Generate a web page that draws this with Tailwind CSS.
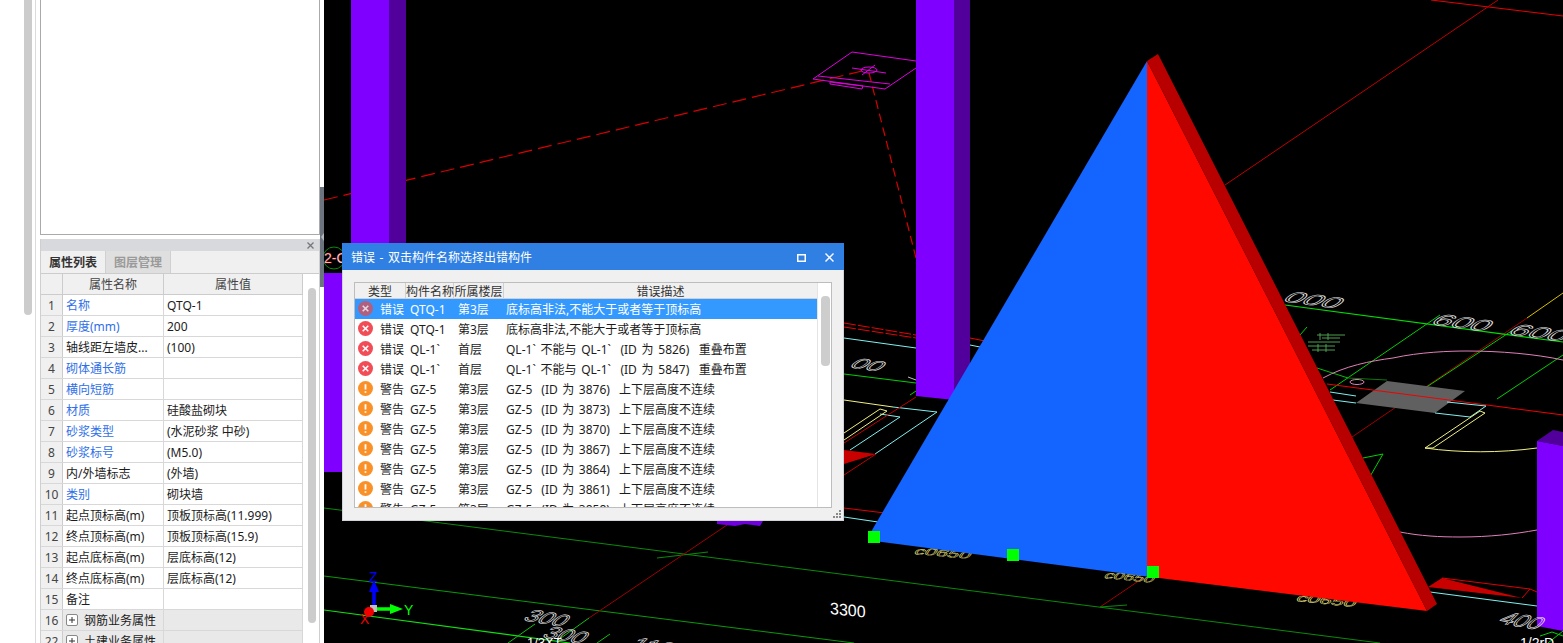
<!DOCTYPE html>
<html lang="zh-CN">
<head>
  <meta charset="UTF-8" />
  <title>错误 - 双击构件名称选择出错构件</title>
  <script src="https://cdn.jsdelivr.net/npm/@tailwindcss/browser@4"></script>
</head>
<body class="bg-black overflow-hidden font-['Noto_Sans','Noto_Sans_CJK_SC',sans-serif] text-[12px] text-[#1c1c1c]">
<div class="flex w-[1563px] h-[643px] overflow-hidden">

  <!-- left property panel -->
  <aside class="w-[324px] h-[643px] bg-white flex shrink-0">
    <div class="ml-[24px] w-[8px] h-[315px] bg-[#cccccc] rounded-b-[4px]"></div>
    <div class="ml-[3px] w-px h-full bg-[#dcdcdc]"></div>
    <div class="ml-[4px] w-[280px] h-full flex flex-col">
      <div class="h-[235px] shrink-0 border-x border-b border-[#aaaaaa] bg-white"></div>
      <div class="mt-[4px] flex-1 flex flex-col border-x border-[#cfcfcf] overflow-hidden">
        <div class="h-[12px] shrink-0 bg-[#d7d9dd] flex items-center justify-end pr-[5px]">
          <svg class="w-[7px] h-[7px]" viewBox="0 0 7 7"><path d="M0.5 .5L6.5 6.5M6.5 .5L.5 6.5" stroke="#777" stroke-width="1.3" fill="none"/></svg>
        </div>
        <!-- tabs -->
        <div class="h-[23px] shrink-0 bg-[#f0f0f0] flex border-b border-[#cccccc] leading-[24px]">
          <div class="w-[65px] text-center font-bold text-[#333333] border-r border-[#d0d0d0]">属性列表</div>
          <div class="w-[65px] text-center bg-[#dfdfdf] font-bold text-[#9a9a9a] border-r border-[#d0d0d0]">图层管理</div>
        </div>
        <div class="flex flex-1 min-h-0">
          <div class="w-[262px] shrink-0">
            <!-- table header -->
            <div class="flex h-[21px] bg-[#f0f0f0] border-b border-[#cccccc] text-[#444444]">
              <div class="w-[22px] border-r border-[#cccccc]"></div>
              <div class="w-[101px] border-r border-[#cccccc] text-center leading-[22px]">属性名称</div>
              <div class="w-[139px] border-r border-[#cccccc] text-center leading-[22px]">属性值</div>
            </div>
            <!-- rows -->
            <div class="flex h-[21px] border-b border-[#d8d8d8]"><div class="w-[22px] bg-[#f0f0f0] border-r border-[#cccccc] text-center leading-[22px] text-[#444444]">1</div><div class="w-[101px] border-r border-[#d8d8d8] pl-[3px] leading-[22px] text-[#2f6fe8] truncate">名称</div><div class="w-[139px] border-r border-[#d8d8d8] pl-[3px] leading-[22px]">QTQ-1</div></div>
            <div class="flex h-[21px] border-b border-[#d8d8d8]"><div class="w-[22px] bg-[#f0f0f0] border-r border-[#cccccc] text-center leading-[22px] text-[#444444]">2</div><div class="w-[101px] border-r border-[#d8d8d8] pl-[3px] leading-[22px] text-[#2f6fe8] truncate">厚度(mm)</div><div class="w-[139px] border-r border-[#d8d8d8] pl-[3px] leading-[22px]">200</div></div>
            <div class="flex h-[21px] border-b border-[#d8d8d8]"><div class="w-[22px] bg-[#f0f0f0] border-r border-[#cccccc] text-center leading-[22px] text-[#444444]">3</div><div class="w-[101px] border-r border-[#d8d8d8] pl-[3px] leading-[22px] truncate">轴线距左墙皮...</div><div class="w-[139px] border-r border-[#d8d8d8] pl-[3px] leading-[22px]">(100)</div></div>
            <div class="flex h-[21px] border-b border-[#d8d8d8]"><div class="w-[22px] bg-[#f0f0f0] border-r border-[#cccccc] text-center leading-[22px] text-[#444444]">4</div><div class="w-[101px] border-r border-[#d8d8d8] pl-[3px] leading-[22px] text-[#2f6fe8] truncate">砌体通长筋</div><div class="w-[139px] border-r border-[#d8d8d8] pl-[3px] leading-[22px]"></div></div>
            <div class="flex h-[21px] border-b border-[#d8d8d8]"><div class="w-[22px] bg-[#f0f0f0] border-r border-[#cccccc] text-center leading-[22px] text-[#444444]">5</div><div class="w-[101px] border-r border-[#d8d8d8] pl-[3px] leading-[22px] text-[#2f6fe8] truncate">横向短筋</div><div class="w-[139px] border-r border-[#d8d8d8] pl-[3px] leading-[22px]"></div></div>
            <div class="flex h-[21px] border-b border-[#d8d8d8]"><div class="w-[22px] bg-[#f0f0f0] border-r border-[#cccccc] text-center leading-[22px] text-[#444444]">6</div><div class="w-[101px] border-r border-[#d8d8d8] pl-[3px] leading-[22px] text-[#2f6fe8] truncate">材质</div><div class="w-[139px] border-r border-[#d8d8d8] pl-[3px] leading-[22px]">硅酸盐砌块</div></div>
            <div class="flex h-[21px] border-b border-[#d8d8d8]"><div class="w-[22px] bg-[#f0f0f0] border-r border-[#cccccc] text-center leading-[22px] text-[#444444]">7</div><div class="w-[101px] border-r border-[#d8d8d8] pl-[3px] leading-[22px] text-[#2f6fe8] truncate">砂浆类型</div><div class="w-[139px] border-r border-[#d8d8d8] pl-[3px] leading-[22px]">(水泥砂浆 中砂)</div></div>
            <div class="flex h-[21px] border-b border-[#d8d8d8]"><div class="w-[22px] bg-[#f0f0f0] border-r border-[#cccccc] text-center leading-[22px] text-[#444444]">8</div><div class="w-[101px] border-r border-[#d8d8d8] pl-[3px] leading-[22px] text-[#2f6fe8] truncate">砂浆标号</div><div class="w-[139px] border-r border-[#d8d8d8] pl-[3px] leading-[22px]">(M5.0)</div></div>
            <div class="flex h-[21px] border-b border-[#d8d8d8]"><div class="w-[22px] bg-[#f0f0f0] border-r border-[#cccccc] text-center leading-[22px] text-[#444444]">9</div><div class="w-[101px] border-r border-[#d8d8d8] pl-[3px] leading-[22px] truncate">内/外墙标志</div><div class="w-[139px] border-r border-[#d8d8d8] pl-[3px] leading-[22px]">(外墙)</div></div>
            <div class="flex h-[21px] border-b border-[#d8d8d8]"><div class="w-[22px] bg-[#f0f0f0] border-r border-[#cccccc] text-center leading-[22px] text-[#444444]">10</div><div class="w-[101px] border-r border-[#d8d8d8] pl-[3px] leading-[22px] text-[#2f6fe8] truncate">类别</div><div class="w-[139px] border-r border-[#d8d8d8] pl-[3px] leading-[22px]">砌块墙</div></div>
            <div class="flex h-[21px] border-b border-[#d8d8d8]"><div class="w-[22px] bg-[#f0f0f0] border-r border-[#cccccc] text-center leading-[22px] text-[#444444]">11</div><div class="w-[101px] border-r border-[#d8d8d8] pl-[3px] leading-[22px] truncate">起点顶标高(m)</div><div class="w-[139px] border-r border-[#d8d8d8] pl-[3px] leading-[22px]">顶板顶标高(11.999)</div></div>
            <div class="flex h-[21px] border-b border-[#d8d8d8]"><div class="w-[22px] bg-[#f0f0f0] border-r border-[#cccccc] text-center leading-[22px] text-[#444444]">12</div><div class="w-[101px] border-r border-[#d8d8d8] pl-[3px] leading-[22px] truncate">终点顶标高(m)</div><div class="w-[139px] border-r border-[#d8d8d8] pl-[3px] leading-[22px]">顶板顶标高(15.9)</div></div>
            <div class="flex h-[21px] border-b border-[#d8d8d8]"><div class="w-[22px] bg-[#f0f0f0] border-r border-[#cccccc] text-center leading-[22px] text-[#444444]">13</div><div class="w-[101px] border-r border-[#d8d8d8] pl-[3px] leading-[22px] truncate">起点底标高(m)</div><div class="w-[139px] border-r border-[#d8d8d8] pl-[3px] leading-[22px]">层底标高(12)</div></div>
            <div class="flex h-[21px] border-b border-[#d8d8d8]"><div class="w-[22px] bg-[#f0f0f0] border-r border-[#cccccc] text-center leading-[22px] text-[#444444]">14</div><div class="w-[101px] border-r border-[#d8d8d8] pl-[3px] leading-[22px] truncate">终点底标高(m)</div><div class="w-[139px] border-r border-[#d8d8d8] pl-[3px] leading-[22px]">层底标高(12)</div></div>
            <div class="flex h-[21px] border-b border-[#d8d8d8]"><div class="w-[22px] bg-[#f0f0f0] border-r border-[#cccccc] text-center leading-[22px] text-[#444444]">15</div><div class="w-[101px] border-r border-[#d8d8d8] pl-[3px] leading-[22px] truncate">备注</div><div class="w-[139px] border-r border-[#d8d8d8] pl-[3px] leading-[22px]"></div></div>
            <div class="flex h-[21px] border-b border-[#d8d8d8] bg-[#e9e9e9]"><div class="w-[22px] bg-[#f0f0f0] border-r border-[#cccccc] text-center leading-[22px] text-[#444444]">16</div><div class="w-[101px] border-r border-[#d8d8d8] pl-[3px] flex items-start gap-[6px] leading-[22px]"><svg class="w-[12px] h-[12px] mt-[4px]" viewBox="0 0 12 12"><rect x=".5" y=".5" width="11" height="11" rx="1.5" fill="#fff" stroke="#888"/><path d="M3 6H9M6 3V9" stroke="#333" stroke-width="1"/></svg><span class="whitespace-nowrap">钢筋业务属性</span></div><div class="w-[139px] border-r border-[#d8d8d8]"></div></div>
            <div class="flex h-[21px] border-b border-[#d8d8d8] bg-[#e9e9e9]"><div class="w-[22px] bg-[#f0f0f0] border-r border-[#cccccc] text-center leading-[22px] text-[#444444]">22</div><div class="w-[101px] border-r border-[#d8d8d8] pl-[3px] flex items-start gap-[6px] leading-[22px]"><svg class="w-[12px] h-[12px] mt-[4px]" viewBox="0 0 12 12"><rect x=".5" y=".5" width="11" height="11" rx="1.5" fill="#fff" stroke="#888"/><path d="M3 6H9M6 3V9" stroke="#333" stroke-width="1"/></svg><span class="whitespace-nowrap">土建业务属性</span></div><div class="w-[139px] border-r border-[#d8d8d8]"></div></div>
          </div>
          <div class="ml-[5px] mt-[14px] w-[8px] h-[335px] bg-[#cccccc] rounded-[4px]"></div>
        </div>
      </div>
    </div>
    <div class="w-[4px] mt-[187px] h-[100px] bg-[#6c757f] flex items-center justify-center">
      <span class="w-0 h-0 border-y-[4px] border-y-transparent border-r-[3px] border-r-[#b4b9be]"></span>
    </div>
  </aside>

  <!-- 3D viewport -->
  <main class="relative flex-1 h-[643px] bg-black overflow-hidden">
    <svg class="absolute left-0 top-0 w-[1239px] h-[643px]" viewBox="324 0 1239 643" fill="none">
      <!-- dashed axis lines -->
      <path d="M324 200L862 71" stroke="#d80000" stroke-width="1.2" stroke-dasharray="14 6"/>
      <path d="M869 73L916 258" stroke="#d80000" stroke-width="1.2" stroke-dasharray="9 5"/>
      <!-- magenta plate -->
      <g stroke="#e000e0" stroke-width="1">
        <path d="M916 61L852 52L813 79L885 89L916 68"/>
        <path d="M818 76L890 84M830 82V84L862 89L863 86L830 82"/>
        <ellipse cx="869" cy="70" rx="8" ry="3"/>
        <path d="M852 68L886 73M862 75L875 65"/>
      </g>
      <!-- top right -->
      <path d="M1431 0L1563 16" stroke="#e80000" stroke-width="1"/>
      <path d="M1225 185L1498 0" stroke="#c00000" stroke-width="1"/>
      <!-- grid lines, right -->
      <path d="M1352 437L1527 318" stroke="#a00000" stroke-width="1"/>
      <path d="M1527 318L1563 293" stroke="#d8c000" stroke-width="1"/>
      <path d="M1285 305L1563 342" stroke="#00e000" stroke-width="1.2"/>
      <path d="M1440 315L1330 390M1513 330L1422 390M1563 355L1497 399M1307 327L1300 335" stroke="#00d000" stroke-width="1"/>
      <path d="M1317 368L1348 378" stroke="#00c000" stroke-width="1"/>
      <path d="M1348 378L1387 380" stroke="#0a7a0a" stroke-width="1"/>
      <!-- small green notes -->
      <path d="M1317 335H1345M1322 338H1340M1308 342H1340M1308 346H1335M1312 350H1335M1320 333V340M1328 333V340M1318 344V352M1326 344V352" stroke="#4f9f4f" stroke-width="1"/>
      <path d="M1323 378C1345 366 1370 361 1393 358C1420 352 1450 351 1467 351C1500 351 1535 354 1563 360" stroke="#e080b8" stroke-width="1"/>
      <ellipse cx="1357" cy="382" rx="7" ry="2.5" stroke="#e080b8" stroke-width="1"/>
      <path d="M1387 381L1465 391L1435 413L1356 403Z" fill="#606060"/>
      <path d="M1327 384L1563 415" stroke="#f00000" stroke-width="1"/>
      <path d="M1330 392L1356 396M1333 400L1356 403M1435 413L1470 417L1486 406L1447 402" stroke="#80f0f0" stroke-width="1"/>
      <path d="M1425 448L1480 411L1485 413L1433 448H1425" stroke="#f0f080" stroke-width="1"/>
      <path d="M1425 448C1460 453 1500 453 1537 448" stroke="#f0f080" stroke-width="1"/>
      <path d="M1363 458L1383 454L1368 480" stroke="#00d000" stroke-width="1"/>
      <path d="M1400 532C1420 536 1440 537 1460 537C1490 537 1515 534 1537 530" stroke="#e080b8" stroke-width="1"/>
      <path d="M1428 587L1442 578L1522 598Z" fill="#c80000"/>
      <path d="M1442 578L1530 589L1522 598M1530 589L1537 592" stroke="#e00000" stroke-width="1"/>
      <path d="M1430 592L1537 606" stroke="#80f0f0" stroke-width="1"/>
      <path d="M1540 636L1552 632L1563 636M1548 643L1563 631" stroke="#00d000" stroke-width="1"/>

      <!-- grid lines, middle -->
      <path d="M844 323L916 335M844 327L916 338" stroke="#f00000" stroke-width="1" stroke-dasharray="12 2"/>
      <path d="M970 338L985 341" stroke="#f00000" stroke-width="1"/>
      <path d="M844 338L916 348M970 345L980 347" stroke="#80f0f0" stroke-width="1"/>
      <path d="M844 374L916 383" stroke="#00d000" stroke-width="1"/>
      <path d="M844 400L893 407" stroke="#f0f080" stroke-width="1"/>
      <path d="M893 407L937 412L875 454M880 414L900 417L850 450" stroke="#80f0f0" stroke-width="1"/>
      <path d="M844 433L880 409L887 411L844 440" stroke="#f0f080" stroke-width="1"/>
      <path d="M916 397L844 443M876 454L844 475" stroke="#c00000" stroke-width="1"/>
      <path d="M844 450L876 454L844 464Z" fill="#c80000"/>
      <path d="M844 508L885 513" stroke="#e00000" stroke-width="1"/>
      <path d="M844 517L878 522" stroke="#80f0f0" stroke-width="1"/>
      <path d="M910 395L916 391" stroke="#00d000" stroke-width="1"/>
      <path d="M908 377L916 380" stroke="#c0c0c0" stroke-width="1"/>

      <!-- bottom grid -->
      <path d="M324 508L1380 643" stroke="#0a8a0a" stroke-width="1"/>
      <path d="M657 558L708 552" stroke="#0a8a0a" stroke-width="1"/>
      <path d="M324 576L854 643" stroke="#0a9a0a" stroke-width="1"/>
      <path d="M324 610L570 643" stroke="#10e010" stroke-width="1.2"/>
      <path d="M727 525L589 618" stroke="#a00000" stroke-width="1"/>
      <path d="M535 624L508 643M589 618L561 638M610 634L597 643" stroke="#10c010" stroke-width="1"/>
      <path d="M1100 607L1143 578" stroke="#a00000" stroke-width="1"/>
      <path d="M1100 607L1127 605" stroke="#0a8a0a" stroke-width="1"/>

      <!-- columns -->
      <rect x="351" y="0" width="38" height="243" fill="#8000ff"/>
      <rect x="389" y="0" width="17" height="243" fill="#52009c"/>
      <path d="M324 273H342V472H324Z" fill="#8000ff"/>
      <path d="M916 0H954V400L916 396Z" fill="#8000ff"/>
      <path d="M954 0H970V370L954 400Z" fill="#52009c"/>
      <path d="M717 521H763L760 526L745 524L735 526L717 524Z" fill="#7000e0"/>
      <path d="M1537 441L1553 430L1563 432V446L1537 441Z" fill="#52009c"/>
      <path d="M1537 441L1563 446V631L1537 626Z" fill="#8000ff"/>

      <!-- axis label behind dialog edge -->
      <circle cx="334" cy="258" r="11" stroke="#0a8a0a" stroke-width="1"/>
      <text x="324" y="263" font-family="Liberation Sans" font-size="14" fill="#ffffff" stroke="#e00000" stroke-width=".3">2-C</text>

      <!-- labels lying on the floor, the wall covers their upper part -->
      <g font-family="Liberation Sans" stroke="#e8e080" stroke-width=".45" fill="none" font-size="12">
        <text transform="matrix(1.7 .14 -.6 .8 913 554)">c0650</text>
        <text transform="matrix(1.5 .14 -.6 .8 1103 578)">c0650</text>
        <text transform="matrix(1.8 .18 -.6 .85 1295 601)">c0650</text>
      </g>

      <!-- wall -->
      <path d="M1147 61L868 537L880 541.7L1147 576.5Z" fill="#1464ff"/>
      <path d="M1147 61L1427 611L1147 576.5Z" fill="#ff0800"/>
      <path d="M1147 61L1158 54L1437 604L1427 611Z" fill="#b80000"/>
      <rect x="868" y="531" width="12" height="12" fill="#00ff00"/>
      <rect x="1007" y="549" width="12" height="12" fill="#00ff00"/>
      <rect x="1147" y="566" width="12" height="12" fill="#00ff00"/>

      <!-- dimension labels -->
      <g font-family="Liberation Sans" stroke="#e8e8e8" stroke-width=".5" fill="none" font-size="16">
        <text transform="matrix(2.05 .28 -1.1 .85 1281 301)">000</text>
        <text transform="matrix(2.1 .28 -1.1 .9 1429 324)">600</text>
        <text transform="matrix(2.1 .28 -1.1 .9 1506 334)">600</text>
        <text transform="matrix(1.7 .25 -1 .8 848 367)">00</text>
        <text transform="matrix(1.5 .25 -1 1 1497 623)">400</text>
        <text transform="matrix(1.5 .25 -1 .95 522 620)">300</text>
        <text transform="matrix(1.5 .25 -1 .95 541 637)">300</text>
        <text transform="matrix(1.5 .25 -1 .95 628 648)">1100</text>
      </g>
      <text transform="matrix(1 .1 0 1.05 830 614)" font-family="Liberation Sans" font-size="16" fill="#ffffff">3300</text>
      <text x="527" y="647" font-family="Liberation Sans" font-size="13" fill="#ffffff">1/3XT</text>
      <text x="1520" y="648" font-family="Liberation Sans" font-size="14" fill="#ffffff">1/2rD</text>

      <!-- axis gizmo -->
      <path d="M374 607V590" stroke="#0000ff" stroke-width="3.5"/>
      <path d="M374 580L379 592H369Z" fill="#0000ff"/>
      <path d="M376 609H392" stroke="#00ff00" stroke-width="3.5"/>
      <path d="M403 609L390 604V614Z" fill="#00ff00"/>
      <rect x="370" y="605" width="7" height="7" fill="#c0c0c0"/>
      <circle cx="369" cy="612" r="5" fill="#f00000"/>
      <text x="369" y="582" font-family="Liberation Sans" font-size="14" fill="#0000ff">Z</text>
      <text x="404" y="615" font-family="Liberation Sans" font-size="14" fill="#00ff00">Y</text>
      <text x="360" y="624" font-family="Liberation Sans" font-size="14" fill="#f00000">X</text>
    </svg>

    <!-- error dialog -->
    <div class="absolute left-[18px] top-[243px] w-[502px] h-[278px] bg-[#f0f0f0] border-x border-b border-[#d0d4da] flex flex-col">
      <div class="h-[27px] shrink-0 -mx-px bg-[#2f80e2] flex items-start leading-[29px] text-white pl-[9px] pr-[10px]">
        <span class="[word-spacing:1.5px]">错误 - 双击构件名称选择出错构件</span>
        <svg class="ml-auto mt-[11px] w-[9px] h-[8px]" viewBox="0 0 9 8"><rect x=".75" y=".75" width="7.5" height="6.5" stroke="#fff" stroke-width="1.5" fill="none"/></svg>
        <svg class="ml-[19px] mt-[10px] w-[9px] h-[9px]" viewBox="0 0 9 9"><path d="M.5 .5L8.5 8.5M8.5 .5L.5 8.5" stroke="#fff" stroke-width="1.4" fill="none"/></svg>
      </div>
      <div class="mt-[12px] ml-[11px] w-[478px] h-[226px] bg-white border border-[#bdbdbd] flex overflow-hidden">
        <div class="w-[462px] shrink-0">
          <div class="flex h-[16px] bg-[#f0f0f0] border-b border-[#d0d0d0] text-[#333333] leading-[17px] whitespace-nowrap">
            <div class="w-[51px] text-center border-r border-[#d0d0d0]">类型</div>
            <div class="w-[48px] text-center border-r border-[#d0d0d0]">构件名称</div>
            <div class="w-[50px] text-center border-r border-[#d0d0d0]">所属楼层</div>
            <div class="flex-1 text-center">错误描述</div>
          </div>
          <div class="flex items-start leading-[22px] h-[20px] pl-[3px] bg-[#3399ff] whitespace-pre">
            <svg class="w-[15px] h-[15px] mt-[2px] mr-[7px]" viewBox="0 0 15 15"><circle cx="7.5" cy="7.5" r="7.5" fill="#b0607e"/><path d="M4.7 4.7L10.3 10.3M10.3 4.7L4.7 10.3" stroke="#e6d6e0" stroke-width="1.6"/></svg>
            <span class="w-[30px] text-white">错误</span><span class="w-[48px] text-white">QTQ-1</span><span class="w-[48px] text-white">第3层</span><span class="text-white">底标高非法,不能大于或者等于顶标高</span>
          </div>
          <div class="flex items-start leading-[22px] h-[20px] pl-[3px] whitespace-pre">
            <svg class="w-[15px] h-[15px] mt-[2px] mr-[7px]" viewBox="0 0 15 15"><circle cx="7.5" cy="7.5" r="7.5" fill="#f24c56"/><path d="M4.7 4.7L10.3 10.3M10.3 4.7L4.7 10.3" stroke="#fff" stroke-width="1.6"/></svg>
            <span class="w-[30px]">错误</span><span class="w-[48px]">QTQ-1</span><span class="w-[48px]">第3层</span><span>底标高非法,不能大于或者等于顶标高</span>
          </div>
          <div class="flex items-start leading-[22px] h-[20px] pl-[3px] whitespace-pre">
            <svg class="w-[15px] h-[15px] mt-[2px] mr-[7px]" viewBox="0 0 15 15"><circle cx="7.5" cy="7.5" r="7.5" fill="#f24c56"/><path d="M4.7 4.7L10.3 10.3M10.3 4.7L4.7 10.3" stroke="#fff" stroke-width="1.6"/></svg>
            <span class="w-[30px]">错误</span><span class="w-[48px]">QL-1`</span><span class="w-[48px]">首层</span><span class="[word-spacing:1.6px]">QL-1` 不能与 QL-1`  (ID 为 5826)  重叠布置</span>
          </div>
          <div class="flex items-start leading-[22px] h-[20px] pl-[3px] whitespace-pre">
            <svg class="w-[15px] h-[15px] mt-[2px] mr-[7px]" viewBox="0 0 15 15"><circle cx="7.5" cy="7.5" r="7.5" fill="#f24c56"/><path d="M4.7 4.7L10.3 10.3M10.3 4.7L4.7 10.3" stroke="#fff" stroke-width="1.6"/></svg>
            <span class="w-[30px]">错误</span><span class="w-[48px]">QL-1`</span><span class="w-[48px]">首层</span><span class="[word-spacing:1.6px]">QL-1` 不能与 QL-1`  (ID 为 5847)  重叠布置</span>
          </div>
          <div class="flex items-start leading-[22px] h-[20px] pl-[3px] whitespace-pre">
            <svg class="w-[15px] h-[15px] mt-[2px] mr-[7px]" viewBox="0 0 15 15"><circle cx="7.5" cy="7.5" r="7.5" fill="#fa9128"/><path d="M7.5 3.2V8.6M7.5 10.2V11.8" stroke="#fff" stroke-width="1.8"/></svg>
            <span class="w-[30px]">警告</span><span class="w-[48px]">GZ-5</span><span class="w-[48px]">第3层</span><span class="[word-spacing:1.4px]">GZ-5  (ID 为 3876)  上下层高度不连续</span>
          </div>
          <div class="flex items-start leading-[22px] h-[20px] pl-[3px] whitespace-pre">
            <svg class="w-[15px] h-[15px] mt-[2px] mr-[7px]" viewBox="0 0 15 15"><circle cx="7.5" cy="7.5" r="7.5" fill="#fa9128"/><path d="M7.5 3.2V8.6M7.5 10.2V11.8" stroke="#fff" stroke-width="1.8"/></svg>
            <span class="w-[30px]">警告</span><span class="w-[48px]">GZ-5</span><span class="w-[48px]">第3层</span><span class="[word-spacing:1.4px]">GZ-5  (ID 为 3873)  上下层高度不连续</span>
          </div>
          <div class="flex items-start leading-[22px] h-[20px] pl-[3px] whitespace-pre">
            <svg class="w-[15px] h-[15px] mt-[2px] mr-[7px]" viewBox="0 0 15 15"><circle cx="7.5" cy="7.5" r="7.5" fill="#fa9128"/><path d="M7.5 3.2V8.6M7.5 10.2V11.8" stroke="#fff" stroke-width="1.8"/></svg>
            <span class="w-[30px]">警告</span><span class="w-[48px]">GZ-5</span><span class="w-[48px]">第3层</span><span class="[word-spacing:1.4px]">GZ-5  (ID 为 3870)  上下层高度不连续</span>
          </div>
          <div class="flex items-start leading-[22px] h-[20px] pl-[3px] whitespace-pre">
            <svg class="w-[15px] h-[15px] mt-[2px] mr-[7px]" viewBox="0 0 15 15"><circle cx="7.5" cy="7.5" r="7.5" fill="#fa9128"/><path d="M7.5 3.2V8.6M7.5 10.2V11.8" stroke="#fff" stroke-width="1.8"/></svg>
            <span class="w-[30px]">警告</span><span class="w-[48px]">GZ-5</span><span class="w-[48px]">第3层</span><span class="[word-spacing:1.4px]">GZ-5  (ID 为 3867)  上下层高度不连续</span>
          </div>
          <div class="flex items-start leading-[22px] h-[20px] pl-[3px] whitespace-pre">
            <svg class="w-[15px] h-[15px] mt-[2px] mr-[7px]" viewBox="0 0 15 15"><circle cx="7.5" cy="7.5" r="7.5" fill="#fa9128"/><path d="M7.5 3.2V8.6M7.5 10.2V11.8" stroke="#fff" stroke-width="1.8"/></svg>
            <span class="w-[30px]">警告</span><span class="w-[48px]">GZ-5</span><span class="w-[48px]">第3层</span><span class="[word-spacing:1.4px]">GZ-5  (ID 为 3864)  上下层高度不连续</span>
          </div>
          <div class="flex items-start leading-[22px] h-[20px] pl-[3px] whitespace-pre">
            <svg class="w-[15px] h-[15px] mt-[2px] mr-[7px]" viewBox="0 0 15 15"><circle cx="7.5" cy="7.5" r="7.5" fill="#fa9128"/><path d="M7.5 3.2V8.6M7.5 10.2V11.8" stroke="#fff" stroke-width="1.8"/></svg>
            <span class="w-[30px]">警告</span><span class="w-[48px]">GZ-5</span><span class="w-[48px]">第3层</span><span class="[word-spacing:1.4px]">GZ-5  (ID 为 3861)  上下层高度不连续</span>
          </div>
          <div class="flex items-start leading-[22px] h-[20px] pl-[3px] whitespace-pre">
            <svg class="w-[15px] h-[15px] mt-[2px] mr-[7px]" viewBox="0 0 15 15"><circle cx="7.5" cy="7.5" r="7.5" fill="#fa9128"/><path d="M7.5 3.2V8.6M7.5 10.2V11.8" stroke="#fff" stroke-width="1.8"/></svg>
            <span class="w-[30px]">警告</span><span class="w-[48px]">GZ-5</span><span class="w-[48px]">第3层</span><span class="[word-spacing:1.4px]">GZ-5  (ID 为 3858)  上下层高度不连续</span>
          </div>
        </div>
        <div class="flex-1 bg-white border-l border-[#e4e4e4] pl-[3px] pt-[13px]">
          <div class="w-[9px] h-[70px] bg-[#cdcdcd] rounded-[4px]"></div>
        </div>
      </div>
      <!-- resize grip -->
      <svg class="absolute right-[2px] bottom-[2px] w-[8px] h-[8px]" viewBox="0 0 8 8"><path d="M6 0h2v2H6zM3 3h2v2H3zM6 3h2v2H6zM0 6h2v2H0zM3 6h2v2H3zM6 6h2v2H6z" fill="#8a8a8a"/></svg>
    </div>
  </main>
</div>
</body>
</html>
